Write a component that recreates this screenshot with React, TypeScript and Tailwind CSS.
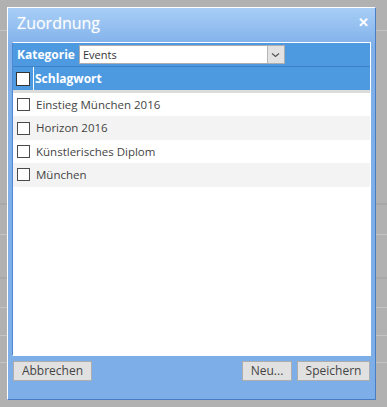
import React from "react";

const rows = ["Einstieg München 2016", "Horizon 2016", "Künstlerisches Diplom", "München"];

const Box = ({ header }: { header?: boolean }) => (
  <div
    className={
      header
        ? "w-[14px] h-[14px] bg-white border border-[#333]"
        : "w-[13px] h-[13px] bg-white border border-[#4a4a4a]"
    }
  />
);

const Btn = ({ label, className }: { label: string; className?: string }) => (
  <button
    className={
      "h-[20px] px-[7px] bg-[#e1e1e1] border border-[#adadad] text-[12px] leading-none text-[#444] " +
      (className ?? "")
    }
  >
    {label}
  </button>
);

export default function App() {
  return (
    <div
      className="relative w-[387px] h-[407px] bg-[#b1b1b1] overflow-hidden"
      style={{ fontFamily: "'Open Sans', 'Noto Sans', sans-serif" }}
    >
      {/* table behind the dialog */}
      <div className="flex flex-col">
        <div className="h-[31px] border-b border-[#c4c4c4]" />
        <div className="h-[174px] border-b-2 border-[#a8a8a8]" />
        <div className="h-[30px] border-b border-[#c4c4c4]" />
        <div className="h-[44px] border-b-2 border-[#a8a8a8]" />
        <div className="h-[29px] border-b border-[#c4c4c4]" />
        <div className="h-[28px] border-b border-[#c4c4c4]" />
        <div className="h-[27px] border-b border-[#c4c4c4]" />
      </div>

      {/* dialog */}
      <div className="absolute left-[7px] top-[7px] w-[369px] h-[393px] flex flex-col border-l border-t border-white border-r border-b border-r-[#4a7ec4] border-b-[#4a7ec4] bg-[linear-gradient(to_bottom,#a8cef6_0px,#80b0ea_38px,#7eaee8_100%)]">
        <div className="h-[34px] flex items-start justify-between pl-[9px] pr-[6px] pt-[3px]">
          <span className="text-white text-[16px] leading-[24px] [text-shadow:0_0_2px_rgba(255,255,255,0.4)]">
            Zuordnung
          </span>
          <span className="text-white text-[13px] font-bold leading-[20px] mt-[1px]">✕</span>
        </div>

        <div className="mx-[4px] h-[314px] flex flex-col bg-white border-t border-r border-b border-white border-l border-l-[#4f88d2]">
          <div className="h-[24px] flex items-center bg-[#4e9ae1] border-b border-[#3e80c8] pl-[4px] gap-[4px]">
            <span className="text-white text-[12px] font-bold">Kategorie</span>
            <div className="w-[206px] h-[19px] flex border border-[#adadad] bg-white">
              <span className="flex-1 pl-[3px] text-[11px] leading-[17px] text-[#333]">Events</span>
              <div className="w-[17px] h-full bg-[#e2e2e2] border-l border-[#b5b5b5] flex items-center justify-center">
                <svg width="9" height="6" viewBox="0 0 9 6">
                  <path d="M1 1.5 L4.5 4.5 L8 1.5" stroke="#555" strokeWidth="1.2" fill="none" />
                </svg>
              </div>
            </div>
          </div>
          <div className="h-[23px] flex items-center bg-[#4e9ae1]">
            <div className="w-[21px] h-full flex items-center justify-center border-r border-white">
              <Box header />
            </div>
            <span className="ml-[1px] text-white text-[12px] font-bold">Schlagwort</span>
          </div>
          <div className="h-[3px] bg-[#dcdcdc]" />
          {rows.map((r, i) => (
            <div
              key={r}
              className={
                "h-[23.4px] flex items-center pl-[4px] gap-[6px] " +
                (i % 2 ? "bg-[#f3f3f3]" : "bg-white")
              }
            >
              <Box />
              <span className="text-[11.5px] text-[#444]">{r}</span>
            </div>
          ))}
        </div>

        <div className="flex items-center px-[5px] mt-[5px] gap-[5px]">
          <Btn label="Abbrechen" className="w-[79px]" />
          <div className="flex-1" />
          <Btn label="Neu..." className="w-[50px]" />
          <Btn label="Speichern" className="w-[73px]" />
        </div>
      </div>
    </div>
  );
}
